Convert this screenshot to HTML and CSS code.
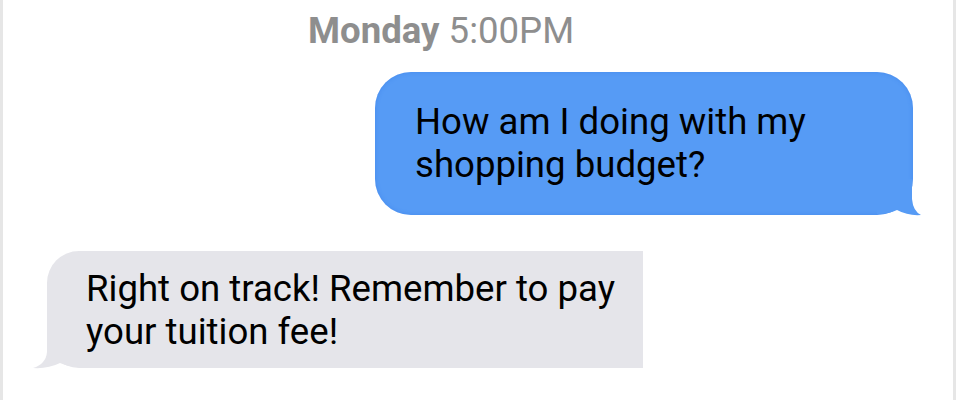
FILE: index.html
```html
<!DOCTYPE html>
<html lang="en">
<head>
<meta charset="utf-8">
<title>Messages</title>
<link rel="stylesheet" href="styles.css">
</head>
<body>
<div class="thread">
  <div class="stamp"><b>Monday</b> 5:00PM</div>
  <div class="row row-out">
    <div class="bubble bubble-out">
      How am I doing with my shopping budget?
      <svg class="tail tail-out" width="45" height="38" viewBox="0 0 45 38"><path d="M35 0 L35 20 Q36 32 44 36 Q31 37 20 31 Q12 35 0 35 L0 0 Z" fill="#569bf5"/></svg>
    </div>
  </div>
  <div class="row row-in">
    <div class="bubble bubble-in">
      Right on track! Remember to pay your tuition fee!
      <svg class="tail tail-in" width="48" height="38" viewBox="0 0 48 38"><path d="M15 0 L15 20 Q14 32 1 36 Q16 37 28 31 Q37 35 48 35 L48 0 Z" fill="#e5e5ea"/></svg>
    </div>
  </div>
</div>
</body>
</html>
```

FILE: styles.css
```css
html, body {
  margin: 0;
  padding: 0;
  background: #ffffff;
}

.thread {
  box-sizing: border-box;
  width: 956px;
  height: 400px;
  overflow: hidden;
  border-left: 3px solid #e6e6e6;
  border-right: 3px solid #e6e6e6;
  font-family: Roboto, "Liberation Sans", sans-serif;
  display: flex;
  flex-direction: column;
}

.stamp {
  padding: 9px 0 0 305px;
  font-size: 36.6px;
  line-height: 43px;
  color: #8e8e8e;
}

.stamp b {
  font-weight: 700;
}

.row {
  display: flex;
}

.row-out {
  justify-content: flex-end;
  margin-top: 20px;
  padding-right: 40px;
}

.row-in {
  justify-content: flex-start;
  margin-top: 36px;
  padding-left: 44px;
}

.bubble {
  position: relative;
  box-sizing: border-box;
  font-size: 36.6px;
  line-height: 43px;
  color: #000;
}

.bubble-out {
  width: 538px;
  height: 143px;
  padding: 28px 90px 0 40px;
  background: #569bf5;
  border-radius: 36px;
  box-shadow: inset 0 0 4px rgba(50, 120, 230, 0.45);
}

.bubble-in {
  width: 596px;
  height: 117px;
  padding: 16px 20px 0 39px;
  background: #e5e5ea;
  border-radius: 32px 0 0 32px;
}

.tail {
  position: absolute;
  display: block;
}

.tail-out {
  right: -9px;
  bottom: -2px;
}

.tail-in {
  left: -15px;
  bottom: -2px;
}
```
